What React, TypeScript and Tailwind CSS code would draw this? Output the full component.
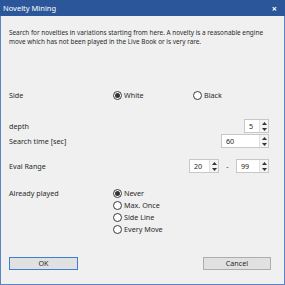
import React from "react";

function Radio({ checked, label }: { checked?: boolean; label: string }) {
  return (
    <div className="flex items-center h-[12px]">
      <span className="w-[9px] h-[9px] rounded-full border border-[#3a3a3a] bg-white flex items-center justify-center mr-[2px]">
        {checked && <span className="w-[5px] h-[5px] rounded-full bg-[#333]" />}
      </span>
      <span>{label}</span>
    </div>
  );
}

function Spin({ value, w }: { value: string; w: string }) {
  return (
    <div className={`flex h-[14px] bg-white border border-[#c8c8c8] ${w}`}>
      <div className="flex-1 flex items-center pl-[4px]">{value}</div>
      <div className="w-[9px] flex flex-col border-l border-[#e0e0e0] bg-[#f4f4f4]">
        <div className="flex-1 flex items-center justify-center">
          <svg width="5" height="3" viewBox="0 0 5 3"><path d="M0 3 L2.5 0 L5 3 Z" fill="#333" /></svg>
        </div>
        <div className="flex-1 flex items-center justify-center">
          <svg width="5" height="3" viewBox="0 0 5 3"><path d="M0 0 L2.5 3 L5 0 Z" fill="#333" /></svg>
        </div>
      </div>
    </div>
  );
}

export default function App() {
  return (
    <div
      className="w-[285px] h-[285px] bg-[#f0f0f0] border-x border-b border-[#5a84c2] flex flex-col text-[7.2px] text-[#2a2a2a] leading-[9px]"
      style={{ fontFamily: '"Noto Sans", "Open Sans", sans-serif' }}
    >
      <div className="h-[16px] bg-[#2b579a] text-white flex items-center justify-between pl-[3px] pr-[8px] -mx-[1px]">
        <span className="text-[7.5px]">Novelty Mining</span>
        <span className="text-[9px] font-bold">×</span>
      </div>
      <div className="flex flex-col pl-[8px] pr-[15px]">
        <div className="mt-[12px] mr-[-10px] text-[6.4px] whitespace-nowrap">
          <div>Search for novelties in variations starting from here. A novelty is a reasonable engine</div>
          <div>move which has not been played in the Live Book or is very rare.</div>
        </div>
        <div className="mt-[43px] flex items-center h-[12px]">
          <div className="w-[104px]">Side</div>
          <div className="w-[80px]"><Radio checked label="White" /></div>
          <Radio label="Black" />
        </div>
        <div className="mt-[18px] flex items-center justify-between h-[14px]">
          <div>depth</div>
          <Spin value="5" w="w-[25px]" />
        </div>
        <div className="mt-[1px] flex items-center justify-between h-[14px]">
          <div>Search time [sec]</div>
          <Spin value="60" w="w-[48px]" />
        </div>
        <div className="mt-[11px] flex items-center justify-between h-[14px]">
          <div>Eval Range</div>
          <div className="flex items-center">
            <Spin value="20" w="w-[30px]" />
            <span className="w-[17px] text-center">-</span>
            <Spin value="99" w="w-[33px]" />
          </div>
        </div>
        <div className="mt-[14px] flex">
          <div className="w-[104px] h-[12px] flex items-center">Already played</div>
          <div className="flex flex-col">
            <Radio checked label="Never" />
            <Radio label="Max. Once" />
            <Radio label="Side Line" />
            <Radio label="Every Move" />
          </div>
        </div>
        <div className="mt-[22px] flex justify-between">
          <div className="w-[69px] h-[13px] border border-[#3c7fd1] bg-[#e1e1e1] flex items-center justify-center">OK</div>
          <div className="w-[68px] h-[13px] border border-[#adadad] bg-[#e1e1e1] flex items-center justify-center mr-[-2px]">Cancel</div>
        </div>
      </div>
    </div>
  );
}
